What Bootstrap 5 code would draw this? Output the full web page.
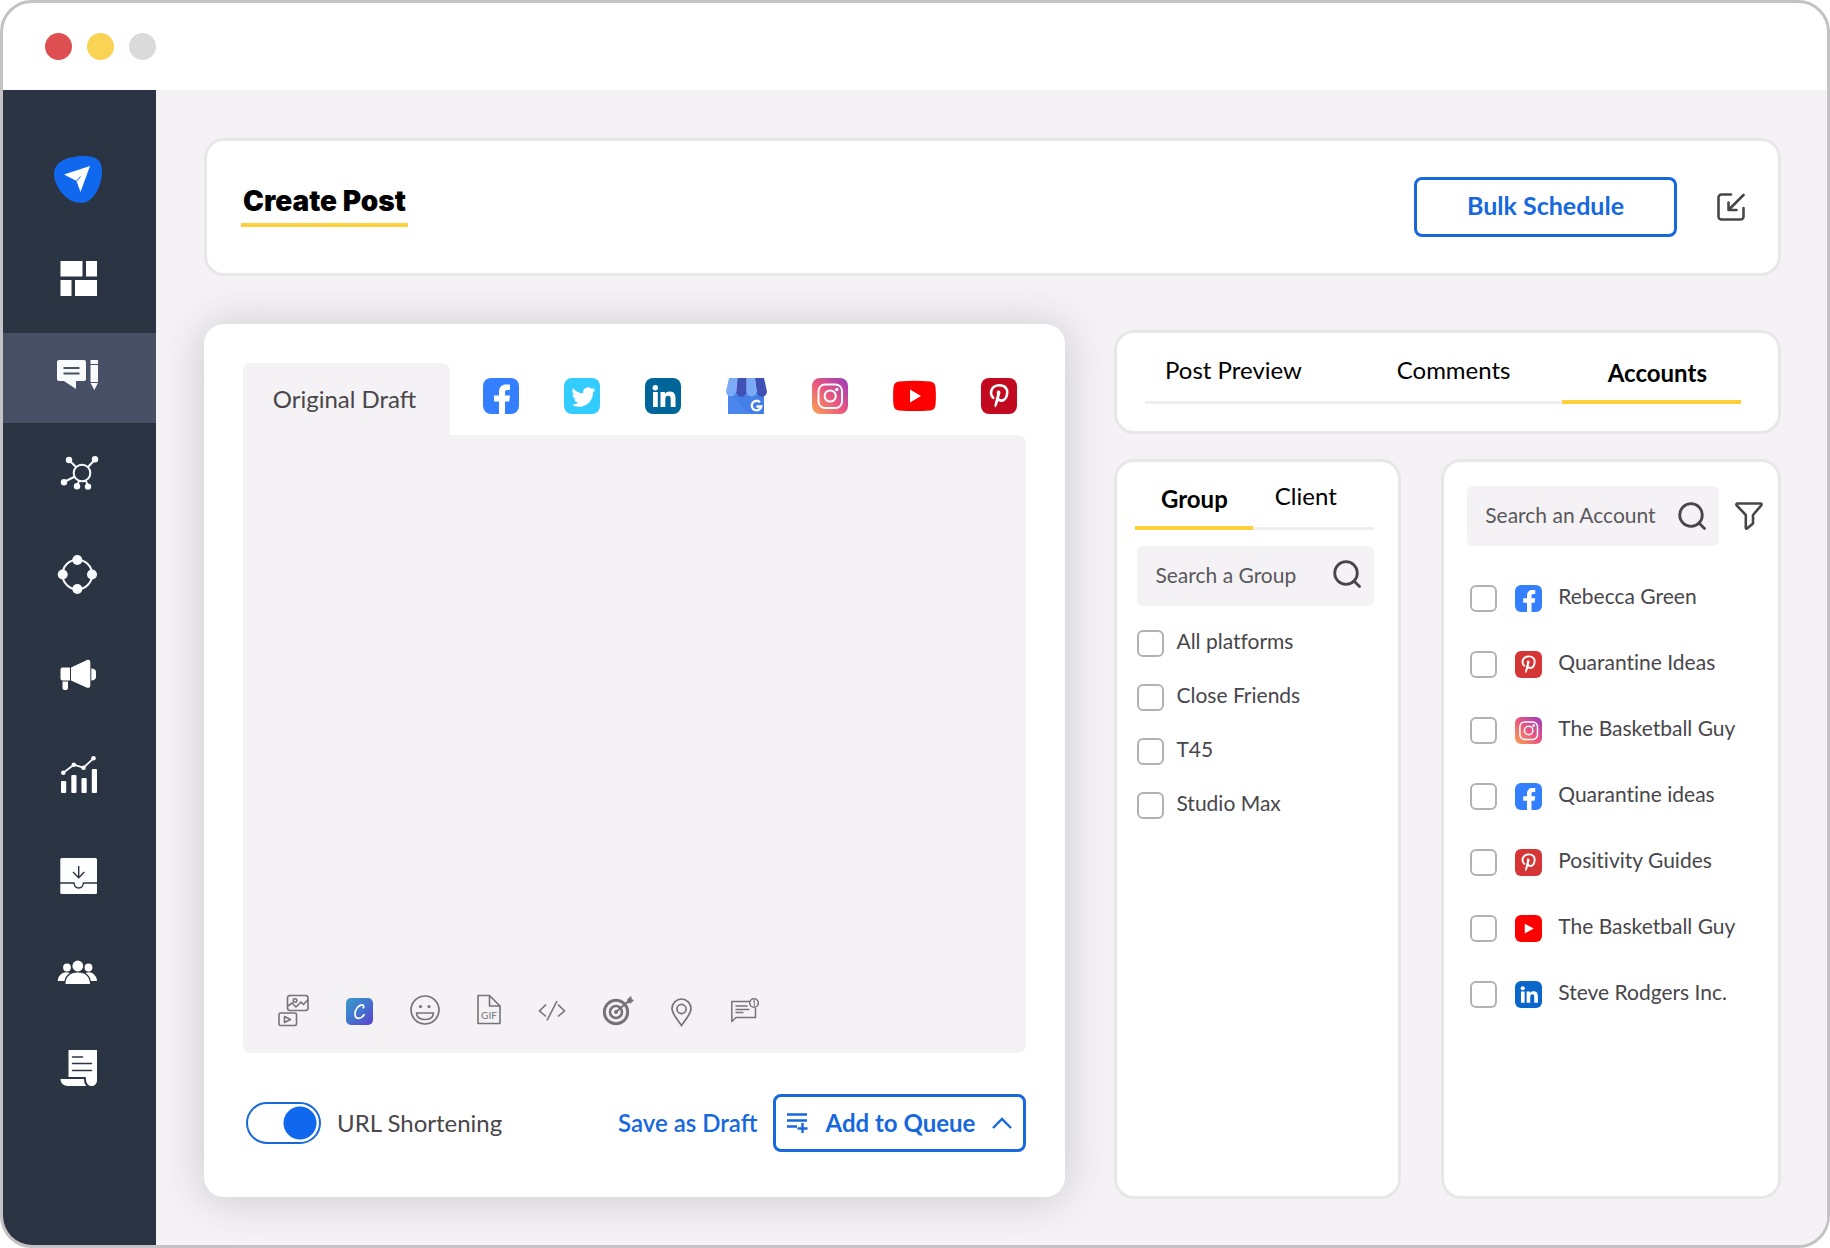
<!DOCTYPE html>
<html lang="en">
<head>
<meta charset="utf-8">
<meta name="viewport" content="width=device-width, initial-scale=1">
<title>Create Post</title>
<link href="https://cdn.jsdelivr.net/npm/bootstrap@5.3.0/dist/css/bootstrap.min.css" rel="stylesheet">
<style>
  :root { --ink:#48464a; --blue:#1668dc; --gold:#fcd03a; --soft:#f4f2f5; --line:#e8e6e9; }
  body { font-family: Lato, "Open Sans", sans-serif; font-size: 21px; line-height: 28px; color: var(--ink); background: #fff; font-variant-ligatures: none; }
  svg { display: block; flex: none; }
  button { color: inherit; }
  .window { min-height: 100vh; border: 3px solid #c4c2c4; border-radius: 32px; overflow: hidden; }
  .titlebar { height: 87px; padding: 0 42px; gap: 15px; }
  .dot { width: 27px; height: 27px; }
  .dot-red { background: #dd4f50; }
  .dot-yellow { background: #fad254; }
  .dot-gray { background: #dadadb; }
  .sidebar { width: 153px; flex: none; background: #2b3443; padding-top: 45px; gap: 9px; }
  .side-item { height: 90px; }
  .side-item.active { background: #475064; }
  .workspace { background: var(--soft); padding: 48px 46px 46px 48px; gap: 48px; min-width: 0; }
  .panel { background: #fff; border: 3px solid var(--line); border-radius: 20px; }
  .page-head { height: 138px; padding: 0 33px 0 34px; }
  .page-title { font-family: Inter, Lato, sans-serif; font-size: 28px; line-height: 28px; font-weight: 900; color: #000; padding: 0 2px 8px; border-bottom: 4px solid var(--gold); }
  .btn-line { border: 3px solid var(--blue); border-radius: 8px; color: var(--blue); font-size: 24px; line-height: 30px; font-weight: 700; }
  .btn-bulk { width: 263px; height: 60px; padding: 0 0 4px; font-size: 25px; }
  .text-link { color: var(--blue); font-size: 24px; line-height: 30px; font-weight: 600; white-space: nowrap; }

  .work-row { gap: 49px; }
  .composer { flex: 784 1 0; border-radius: 20px; padding: 39px 39px 45px 39px; margin-bottom: 2px; box-shadow: 0 2px 44px rgba(60,50,70,.22); }
  .draft-tab { width: 207px; height: 72px; border: 0; background: var(--soft); border-radius: 8px 8px 0 0; font-size: 24px; padding: 0 10px 0 6px; }
  .networks { padding: 15px 9px 0 33px; }
  .editor { background: var(--soft); border-radius: 0 8px 8px 8px; }
  .editor textarea { border: 0; background: transparent; resize: none; padding: 24px 30px; }
  .tools { padding: 0 35px 26px; gap: 16px 37px; color: #757377; }
  .plain { border: 0; background: none; padding: 0; }
  .composer-foot { margin-top: 41px; padding-left: 3px; }
  .form-switch .url-toggle { width: 75px; height: 42px; margin: 0; flex: none; border: 2px solid var(--blue); background: radial-gradient(circle at calc(100% - 19px) 50%, #1068ee 16px, #fff 17px); }
  .form-switch .url-toggle:not(:checked) { background: radial-gradient(circle at 19px 50%, #9a989c 16px, #fff 17px); }
  .foot-text { font-size: 24px; white-space: nowrap; }
  .btn-queue { width: 253px; height: 58px; padding: 0 11px; white-space: nowrap; }

  .side-col { flex: 667 1 0; min-width: 0; gap: 25px; padding-top: 6px; }
  .lists { gap: 40px; }
  .tabs-card { height: 104px; padding: 21px 37px 0 28px; }
  .tabrow { box-shadow: inset 0 -3px #f0eef1; }
  .tabrow .nav-link { color: #000; border: 0; border-radius: 0; background: none; padding: 0 0 14px; font-size: 24px; line-height: 32px; border-bottom: 4px solid transparent; }
  .tabrow .nav-link.active { font-weight: 700; padding: 3px 0 11px; border-bottom-color: var(--gold); }
  .tabs-main .nav-link { flex: 180 1 0; }
  .tabs-main .nav-link:nth-child(2) { flex-grow: 221; }
  .tabs-main .nav-link.active { flex: 171 1 0; padding-left: 12px; }
  .group-card { flex: 239 1 0; padding: 18px 24px 24px 18px; }
  .group-tabs .nav-link { flex: 105 1 0; }
  .group-tabs .nav-link.active { flex: 118 1 0; }
  .search { background: var(--soft); border-radius: 6px; height: 60px; padding: 0 13px 0 18px; }
  .search input { border: 0; background: none; padding: 0 0 2px; width: 0; outline: 0; color: var(--ink); }
  .search input::placeholder { color: #5a585c; opacity: 1; }
  .group-search { margin: 16px 0 0 2px; }
  .group-search svg { margin-bottom: 5px; }
  .group-list { margin: 24px 0 0 2px; gap: 27px; }
  .account-card { flex: 296 1 0; padding: 24px 15px 24px 23px; }
  .account-list { margin: 39px 0 0 3px; gap: 39px; }
  .account-list .form-check-input { margin-right: 2px; }
  .pick { height: 27px; }
  .pick .form-check-input { width: 27px; height: 27px; margin-top: 0; margin-left: 0; border: 2px solid #b3b1b5; border-radius: 6px; flex: none; }
  .pick label { padding-bottom: 5px; white-space: nowrap; }
</style>
</head>
<body>
<svg width="0" height="0" class="position-absolute" aria-hidden="true">
  <defs>
    <linearGradient id="igFill" x1="0" y1="1" x2="1" y2="0"><stop offset="0" stop-color="#fba457"/><stop offset=".5" stop-color="#e8567f"/><stop offset="1" stop-color="#9a3bc0"/></linearGradient>
    <linearGradient id="cFill" x1="0" y1="0" x2="1" y2="1"><stop offset="0" stop-color="#3a9bcb"/><stop offset=".5" stop-color="#4274cf"/><stop offset="1" stop-color="#5e3fd0"/></linearGradient>
    <symbol id="fb" viewBox="0 0 36 36"><rect width="36" height="36" rx="8" fill="#337fff"/><path fill="#fff" d="M16 36V23.500h-5v-6h5V14c0-5 3-7.500 7-7.500h4V12h-2.500c-2 0-2.500 1-2.500 2.500v3h5l-.8 6H22V36z"/></symbol>
    <symbol id="tw" viewBox="0 0 36 36"><rect width="36" height="36" rx="8" fill="#33ccff"/><path transform="translate(7.500 6.300) scale(1.500)" fill="#fff" d="M5.026 15c6.038 0 9.341-5.003 9.341-9.334 0-.14 0-.282-.006-.422A6.685 6.685 0 0 0 16 3.542a6.658 6.658 0 0 1-1.889.518 3.301 3.301 0 0 0 1.447-1.817 6.533 6.533 0 0 1-2.087.793A3.286 3.286 0 0 0 7.875 6.030a9.325 9.325 0 0 1-6.767-3.429 3.289 3.289 0 0 0 1.018 4.382A3.323 3.323 0 0 1 .64 6.575v.045a3.288 3.288 0 0 0 2.632 3.218 3.203 3.203 0 0 1-.865.115 3.230 3.230 0 0 1-.614-.057 3.283 3.283 0 0 0 3.067 2.277A6.588 6.588 0 0 1 .78 13.580a6.320 6.320 0 0 1-.78-.045A9.344 9.344 0 0 0 5.026 15z"/></symbol>
    <symbol id="li" viewBox="0 0 36 36"><rect width="36" height="36" rx="8" fill="currentColor"/><circle cx="10.300" cy="9.700" r="2.700" fill="#fff"/><path fill="#fff" d="M8 14h4.800v15H8zM15.500 14H20v2c1-1.600 2.600-2.400 4.800-2.400 4.400 0 5.700 2.800 5.700 7V29h-4.800v-7.600c0-2-.4-3.600-2.500-3.600-2.200 0-2.900 1.500-2.900 3.600V29h-4.800z"/></symbol>
    <symbol id="ig" viewBox="0 0 36 36"><rect width="36" height="36" rx="8" fill="url(#igFill)"/><g fill="none" stroke="#fff" stroke-width="2"><rect x="6.500" y="6.500" width="23.500" height="23.500" rx="6.500"/><circle cx="18.200" cy="18" r="5.600"/></g><circle cx="24.800" cy="11.500" r="1.700" fill="#fff"/></symbol>
    <symbol id="pin" viewBox="0 0 36 36"><rect width="36" height="36" rx="8" fill="currentColor"/><path fill="none" stroke="#fff" stroke-width="2.600" stroke-linecap="round" stroke-linejoin="round" d="M12.300 19.800C8 15.500 10 7.300 18.300 7.200c6 0 8.300 3.800 7.900 8-.5 5-3.300 7.600-6.200 7.400-2-.2-3-1.300-3.200-2.200"/><path fill="#fff" d="M16.600 12.800c1.800-.7 3.200.4 2.700 2.600l-3 10.800c-.4 1.300-1.200 2.400-2.200 3.300-.8-1.500-.6-3-.3-4.300l2.200-8.800c-.4-1.500-.3-3 .6-3.600z"/></symbol>
    <symbol id="yt" viewBox="0 0 36 36"><rect width="36" height="36" rx="8" fill="#f00"/><path fill="#fff" d="M13 11.500v13l12-6.500z"/></symbol>
    <symbol id="lens" viewBox="0 0 28 28"><g fill="none" stroke="#48464a" stroke-width="2.800" stroke-linecap="round"><circle cx="13" cy="13" r="11.300"/><path d="M21 21l5.500 5.500"/></g></symbol>
  </defs>
</svg>

<div class="window d-flex flex-column">
  <header class="titlebar d-flex align-items-center">
    <span class="dot dot-red rounded-circle"></span>
    <span class="dot dot-yellow rounded-circle"></span>
    <span class="dot dot-gray rounded-circle"></span>
  </header>

  <div class="d-flex flex-grow-1">
    <nav class="sidebar d-flex flex-column" aria-label="Main">
      <a href="#" class="side-item d-flex justify-content-center align-items-center" aria-label="Home"><svg width="61" height="60" viewBox="49 150 61 60"><path fill="#1068ee" d="M54 174c0-12 13-18 30-18 12 0 18 4 18 15 0 14-8 32-21 32-15 0-27-17-27-29z"/><path fill="#fff" d="M64 174.500L90 166l-9.500 26-4-11z"/><path d="M76.500 181l4-4.500" stroke="#1068ee" stroke-width="1"/></svg></a>
      <a href="#" class="side-item d-flex justify-content-center align-items-center" aria-label="Dashboard"><svg width="61" height="60" viewBox="49 249 61 60" fill="#fff"><path d="M60.500 261h22v15.500h-22zM86 261h11v15.500H86zM60.500 280h11v16h-11zM75 280h22v16H75z"/></svg></a>
      <a href="#" class="side-item active d-flex justify-content-center align-items-center" aria-label="Posts" aria-current="page"><svg width="61" height="60" viewBox="49 348 61 60"><path fill="#f8fafc" d="M59 360h25a2 2 0 0 1 2 2v17a2 2 0 0 1-2 2h-8v8l-12-8h-5a2 2 0 0 1-2-2v-17a2 2 0 0 1 2-2zM90.500 360H98v4h-7.500zM90.500 365H98v17h-7.500zM90.500 383H98l-3.700 7z"/><path d="M63.500 368h16M63.500 373.500h16" stroke="#475064" stroke-width="2"/></svg></a>
      <a href="#" class="side-item d-flex justify-content-center align-items-center" aria-label="Network"><svg width="61" height="60" viewBox="49 447 61 60"><g fill="none" stroke="#f8fbff" stroke-width="2"><circle cx="82" cy="473" r="8.300"/><path d="M76 467l-7-7M88 467l7-7.500M75 476.500l-11 5.500M79 481l-2 5M86 481l2 5"/></g><g fill="#f8fbff"><circle cx="69" cy="460" r="3.200"/><circle cx="95" cy="459.300" r="3.200"/><circle cx="64" cy="482.300" r="3.200"/><circle cx="77" cy="486.300" r="3.200"/><circle cx="88" cy="486.600" r="3.200"/></g></svg></a>
      <a href="#" class="side-item d-flex justify-content-center align-items-center" aria-label="Connections"><svg width="61" height="60" viewBox="49 546 61 60"><circle cx="77.300" cy="574.500" r="14.800" fill="none" stroke="#f8fbff" stroke-width="2"/><g fill="#f8fbff"><circle cx="77.300" cy="560" r="5"/><circle cx="77.300" cy="589" r="5"/><circle cx="62.700" cy="574.500" r="5"/><circle cx="92" cy="574.500" r="5"/></g></svg></a>
      <a href="#" class="side-item d-flex justify-content-center align-items-center" aria-label="Campaigns"><svg width="61" height="60" viewBox="49 645 61 60" fill="#fff"><path d="M62.500 667.500H70v13h-7.500a2 2 0 0 1-2-2v-9a2 2 0 0 1 2-2zM71 667.500l15.500-7.300c2-.9 3.800-.2 3.800 1.800v23.500c0 2-1.800 2.900-3.800 2L71 680.500zM91.300 668.500c3 0 4.700 1.500 4.700 3.500v5c0 2-1.700 3.500-4.700 3.500zM62.500 681.500H68v6.500a2 2 0 0 1-2 2h-1.500a2 2 0 0 1-2-2z"/></svg></a>
      <a href="#" class="side-item d-flex justify-content-center align-items-center" aria-label="Analytics"><svg width="61" height="60" viewBox="49 744 61 60" fill="#fff"><rect x="61" y="781" width="5.200" height="12" rx="1"/><rect x="71.300" y="775" width="5.200" height="18" rx="1"/><rect x="81.500" y="778" width="5.200" height="15" rx="1"/><rect x="91.800" y="769" width="5.200" height="24" rx="1"/><path d="M63.300 772.700l10.500-8 9.700 3 10-9.400" fill="none" stroke="#f8fbff" stroke-width="1.800"/><circle cx="63.300" cy="772.700" r="2.300"/><circle cx="73.800" cy="764.700" r="2.300"/><circle cx="83.500" cy="767.700" r="2.300"/><circle cx="93.500" cy="758.300" r="2.300"/></svg></a>
      <a href="#" class="side-item d-flex justify-content-center align-items-center" aria-label="Inbox"><svg width="61" height="60" viewBox="49 843 61 60"><rect x="60.300" y="858" width="36.700" height="36" rx="1.500" fill="#fcfeff"/><path d="M60 883h14c.3 3 2 5 4.700 5s4.400-2 4.700-5H97M78.700 866v12M73 872l5.700 5.700 5.700-5.700" fill="none" stroke="#2d3342" stroke-width="1.400"/></svg></a>
      <a href="#" class="side-item d-flex justify-content-center align-items-center" aria-label="Team"><svg width="61" height="60" viewBox="49 942 61 60" fill="#fff"><circle cx="67" cy="967.500" r="3.900"/><circle cx="88.500" cy="967.500" r="3.900"/><circle cx="77.800" cy="966" r="5.400"/><path d="M65.500 984c0-7 4.500-11.500 12.300-11.500S90 977 90 984zM57.800 981c0-5 4-8.500 8-8.800 1.500 0 2.800.3 4 .8-3.500 2-5 5-5.300 8zM97 981c0-5-4-8.500-8-8.800-1.200 0-2.400.3-3.500.8 3.500 2 5 5 5.300 8z"/></svg></a>
      <a href="#" class="side-item d-flex justify-content-center align-items-center" aria-label="Reports"><svg width="61" height="60" viewBox="49 1041 61 60"><path fill="#fff" d="M68.500 1050H97v30c0 4-2.500 6-5.500 6s-5-2-5.500-5.500l-.3-3.500H68.500zM60.500 1079H84c0 3 .7 5.300 2.300 7H68c-4.500 0-7.500-3-7.500-7z"/><path d="M72.500 1057h10M72.500 1063.500h19M72.500 1070.500h19" stroke="#2d3342" stroke-width="1.500" stroke-linecap="round"/></svg></a>
    </nav>

    <main class="workspace d-flex flex-column flex-grow-1">
      <section class="panel page-head d-flex align-items-center justify-content-between">
        <h1 class="page-title m-0">Create Post</h1>
        <div class="d-flex align-items-center gap-4">
          <button type="button" class="btn btn-line btn-bulk me-3">Bulk Schedule</button>
          <button type="button" class="plain" aria-label="Import"><svg width="28" height="28" viewBox="0 0 28 28" fill="none" stroke="#48464a" stroke-width="2.600" stroke-linecap="round" stroke-linejoin="round"><path d="M14 1.500H4.500a3 3 0 0 0-3 3v19a3 3 0 0 0 3 3h19a3 3 0 0 0 3-3V15M26.500 2L12 16.500M11.500 9.500V17H19.500"/></svg></button>
        </div>
      </section>

      <div class="work-row d-flex flex-grow-1">
        <section class="composer bg-white d-flex flex-column">
          <div class="d-flex">
            <button type="button" class="draft-tab">Original Draft</button>
            <div class="networks d-flex flex-grow-1 justify-content-between align-items-start">
              <button type="button" class="plain" aria-label="Facebook"><svg width="36" height="36"><use href="#fb"/></svg></button>
              <button type="button" class="plain" aria-label="Twitter"><svg width="36" height="36"><use href="#tw"/></svg></button>
              <button type="button" class="plain" aria-label="LinkedIn"><svg width="36" height="36" color="#006699"><use href="#li"/></svg></button>
              <button type="button" class="plain" aria-label="Google My Business"><svg width="41" height="36" viewBox="0 0 41 36"><path fill="#4a86ee" d="M2 14h36v22H2z"/><path fill="#3c78dd" d="M6 18l18 18h14V18z" opacity=".5"/><path fill="#7baaf7" d="M3 0h8.500L10 13.500a5 5 0 0 1-10 0zM20.500 0H29l1.500 13.500a5 5 0 0 1-10 0z"/><path fill="#3f51b5" d="M11.500 0h9v13.500a5 5 0 0 1-10.300 0zM29 0h9l3 13.500a5 5 0 0 1-10.300 0z"/><path fill="none" stroke="#fff" stroke-width="2.300" d="M34 24.200a4.800 4.800 0 1 0 1.300 4.300h-4.800"/></svg></button>
              <button type="button" class="plain" aria-label="Instagram"><svg width="36" height="36"><use href="#ig"/></svg></button>
              <button type="button" class="plain" aria-label="YouTube"><svg width="43" height="36" viewBox="0 0 43 36"><path fill="#f00" d="M6 3.500Q21.500 2 37 3.500 42 4 42.500 9q.8 9 0 18-.5 5-5.500 5.500-15.500 1.200-31 0Q1 32 .5 27q-.8-9 0-18Q1 4 6 3.500z"/><path fill="#fff" d="M17 11.500v13L28 18z"/></svg></button>
              <button type="button" class="plain" aria-label="Pinterest"><svg width="36" height="36" color="#c10a20"><use href="#pin"/></svg></button>
            </div>
          </div>
          <div class="editor d-flex flex-column flex-grow-1">
            <textarea class="w-100 flex-grow-1" aria-label="Post text"></textarea>
            <div class="tools d-flex flex-wrap align-items-center">
              <button type="button" class="plain" aria-label="Media"><svg width="31" height="34" viewBox="278 993 31 34" fill="none" stroke="currentColor" stroke-width="1.600" stroke-linejoin="round"><rect x="287.500" y="995.500" width="20.500" height="15" rx="2.500"/><path d="M288 1006l4-3 4 4 5-5 2.500 2.500 4.500-5"/><circle cx="295" cy="1000.500" r="1.800"/><rect x="279" y="1013" width="17.500" height="12.500" rx="1.500"/><path d="M284.500 1016.500v6l6-3z"/></svg></button>
              <button type="button" class="plain" aria-label="Canva"><svg width="27" height="34" viewBox="0 0 27 34"><rect y="5" width="27" height="27" rx="5" fill="url(#cFill)"/><path d="M17.300 14.800c.8-1 .4-3-1.300-3-3.500 0-7 5-7 9.200 0 3 1.700 4.300 3.700 4.300 2.200 0 4-1.500 5.300-3.600" fill="none" stroke="#fff" stroke-width="1.700" stroke-linecap="round"/></svg></button>
              <button type="button" class="plain" aria-label="Emoji"><svg width="30" height="34" viewBox="410 993 30 34" fill="none" stroke="currentColor" stroke-width="1.700"><circle cx="425" cy="1010" r="14"/><path d="M416.500 1013h17c-.5 4.500-4 6.500-8.500 6.500s-8-2-8.500-6.500z" stroke-linejoin="round"/><g fill="currentColor" stroke="none"><circle cx="420.500" cy="1006.500" r="1.600"/><circle cx="429" cy="1006.500" r="1.600"/></g></svg></button>
              <button type="button" class="plain" aria-label="GIF"><svg width="24" height="34" viewBox="477 993 24 34"><path d="M478 995.500H489.500l10.500 10.500v17.500h-22zM489.500 995.500V1006h10.500" fill="none" stroke="currentColor" stroke-width="1.600" stroke-linejoin="round"/><text x="489" y="1019" text-anchor="middle" font-size="10" fill="currentColor">GIF</text></svg></button>
              <button type="button" class="plain" aria-label="Code"><svg width="28" height="34" viewBox="541 993 28 34" fill="none" stroke="currentColor" stroke-width="1.600"><path d="M549 1004.500l-6.500 6.500 6.500 5.500M561 1004.500l6.500 6.500-6.500 5.500M560 1001l-10 19.500"/></svg></button>
              <button type="button" class="plain" aria-label="Target"><svg width="31" height="34" viewBox="605 993 31 34" fill="none" stroke="currentColor"><circle cx="618" cy="1012" r="11.700" stroke-width="3"/><circle cx="618" cy="1012" r="6" stroke-width="2.600"/><circle cx="618" cy="1012" r="2" fill="currentColor" stroke="none"/><path d="M618 1012l12-10.500" stroke-width="2"/><path d="M629 1002.500l1-3.500 3-2.500.3 3 2.200.8-3 2.700z" fill="currentColor" stroke-width=".8"/></svg></button>
              <button type="button" class="plain" aria-label="Location"><svg width="21" height="34" viewBox="672 993 21 34" fill="none" stroke="currentColor" stroke-width="1.700"><path d="M682.500 1025.500c-4-6-9.500-11.500-9.500-17a9.500 9.500 0 0 1 19 0c0 5.500-5.500 11-9.500 17z"/><circle cx="682.500" cy="1009" r="4.600"/></svg></button>
              <button type="button" class="plain" aria-label="Note"><svg width="30" height="34" viewBox="732 993 30 34" fill="none" stroke="currentColor" stroke-width="1.500"><path d="M753 1001.500h-18.200v20l4.200-4h19.500V1008M738.500 1006h12M738.500 1009.500h14M738.500 1012.500h8" stroke-linejoin="round"/><circle cx="757" cy="1003" r="4.300"/><path d="M756 1001.500l1.300-1v5.300" stroke-width="1"/></svg></button>
            </div>
          </div>
          <div class="composer-foot d-flex align-items-center justify-content-between">
            <div class="form-check form-switch d-flex align-items-center gap-3 p-0 m-0">
              <input class="form-check-input url-toggle" type="checkbox" role="switch" id="urlShort" checked>
              <label class="foot-text" for="urlShort">URL Shortening</label>
            </div>
            <div class="d-flex align-items-center gap-3">
              <button type="button" class="plain text-link">Save as Draft</button>
              <button type="button" class="btn btn-line btn-queue d-flex align-items-center justify-content-between">
                <svg width="21" height="22" viewBox="0 0 21 22" fill="none" stroke="currentColor" stroke-width="2.400"><path d="M0 2.500h20M0 8.500h20M0 14.500h10M15.500 11v10M10.500 16.500h10"/></svg>
                Add to Queue
                <svg width="20" height="12" viewBox="0 0 20 12" fill="none" stroke="currentColor" stroke-width="2.400"><path d="M1 11l9-9 9 9"/></svg>
              </button>
            </div>
          </div>
        </section>

        <div class="side-col d-flex flex-column">
          <section class="panel tabs-card">
            <div class="nav tabrow tabs-main flex-nowrap" role="tablist">
              <button class="nav-link" role="tab" type="button">Post Preview</button>
              <button class="nav-link ps-4" role="tab" type="button">Comments</button>
              <button class="nav-link active" role="tab" type="button" aria-selected="true">Accounts</button>
            </div>
          </section>
          <div class="lists d-flex flex-grow-1">
            <section class="panel group-card">
              <div class="nav tabrow group-tabs flex-nowrap" role="tablist">
                <button class="nav-link active" role="tab" type="button" aria-selected="true">Group</button>
                <button class="nav-link pe-3" role="tab" type="button">Client</button>
              </div>
              <label class="search group-search d-flex align-items-center"><input class="flex-grow-1" type="search" placeholder="Search a Group" aria-label="Search a Group"><svg width="28" height="28"><use href="#lens"/></svg></label>
              <div class="group-list d-flex flex-column">
                <div class="pick d-flex align-items-center gap-2"><input class="form-check-input me-1" type="checkbox" id="g1"><label for="g1">All platforms</label></div>
                <div class="pick d-flex align-items-center gap-2"><input class="form-check-input me-1" type="checkbox" id="g2"><label for="g2">Close Friends</label></div>
                <div class="pick d-flex align-items-center gap-2"><input class="form-check-input me-1" type="checkbox" id="g3"><label for="g3">T45</label></div>
                <div class="pick d-flex align-items-center gap-2"><input class="form-check-input me-1" type="checkbox" id="g4"><label for="g4">Studio Max</label></div>
              </div>
            </section>
            <section class="panel account-card">
              <div class="d-flex align-items-center gap-3">
                <label class="search d-flex align-items-center flex-grow-1"><input class="flex-grow-1" type="search" placeholder="Search an Account" aria-label="Search an Account"><svg width="28" height="28"><use href="#lens"/></svg></label>
                <button type="button" class="plain" aria-label="Filter"><svg width="28" height="28" viewBox="0 0 28 28" fill="none" stroke="#48464a" stroke-width="2.600" stroke-linejoin="round"><path d="M2.500 1.500h23c1 0 1.300 1 .8 1.800L18 13v8.500l-6 5c-.8.500-1.200 0-1.200-.7V13L1.700 3.300C1 2.500 1.500 1.500 2.500 1.500z"/></svg></button>
              </div>
              <div class="account-list d-flex flex-column">
                <div class="pick d-flex align-items-center gap-3"><input class="form-check-input" type="checkbox" id="a1"><svg width="27" height="27"><use href="#fb"/></svg><label for="a1">Rebecca Green</label></div>
                <div class="pick d-flex align-items-center gap-3"><input class="form-check-input" type="checkbox" id="a2"><svg width="27" height="27" color="#d63535"><use href="#pin"/></svg><label for="a2">Quarantine Ideas</label></div>
                <div class="pick d-flex align-items-center gap-3"><input class="form-check-input" type="checkbox" id="a3"><svg width="27" height="27"><use href="#ig"/></svg><label for="a3">The Basketball Guy</label></div>
                <div class="pick d-flex align-items-center gap-3"><input class="form-check-input" type="checkbox" id="a4"><svg width="27" height="27"><use href="#fb"/></svg><label for="a4">Quarantine ideas</label></div>
                <div class="pick d-flex align-items-center gap-3"><input class="form-check-input" type="checkbox" id="a5"><svg width="27" height="27" color="#d63535"><use href="#pin"/></svg><label for="a5">Positivity Guides</label></div>
                <div class="pick d-flex align-items-center gap-3"><input class="form-check-input" type="checkbox" id="a6"><svg width="27" height="27"><use href="#yt"/></svg><label for="a6">The Basketball Guy</label></div>
                <div class="pick d-flex align-items-center gap-3"><input class="form-check-input" type="checkbox" id="a7"><svg width="27" height="27" color="#0a66c8"><use href="#li"/></svg><label for="a7">Steve Rodgers Inc.</label></div>
              </div>
            </section>
          </div>
        </div>
      </div>
    </main>
  </div>
</div>
<script src="https://cdn.jsdelivr.net/npm/bootstrap@5.3.0/dist/js/bootstrap.bundle.min.js"></script>
</body>
</html>
